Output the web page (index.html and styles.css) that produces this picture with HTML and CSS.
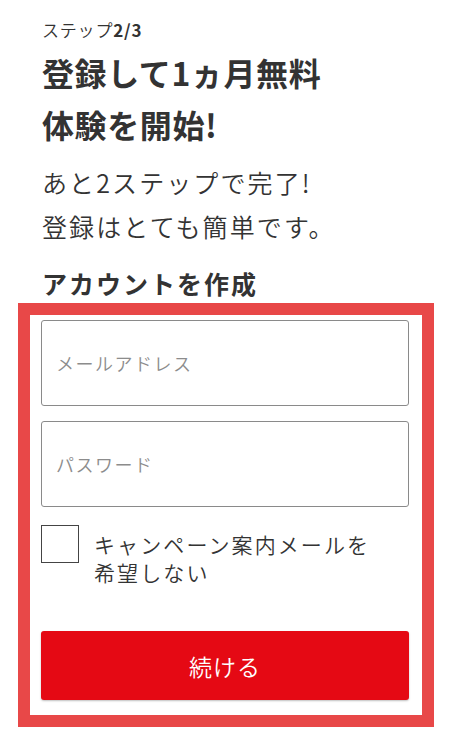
FILE: index.html
```html
<!DOCTYPE html>
<html lang="ja">
<head>
    <meta charset="UTF-8">
    <meta name="viewport" content="width=device-width, initial-scale=1.0">
    <title>登録して1ヵ月無料体験を開始!</title>
    <link rel="stylesheet" href="styles.css">
</head>
<body>

<div class="page">
    <div class="step">ステップ<b>2/3</b></div>
    <h1 class="title">登録して1ヵ月無料<br>体験を開始!</h1>
    <p class="lead">あと2ステップで完了!<br>登録はとても簡単です。</p>
    <h2 class="section">アカウントを作成</h2>

    <div class="highlight">
        <div class="field">
            <input type="email" placeholder="メールアドレス">
        </div>
        <div class="field">
            <input type="password" placeholder="パスワード">
        </div>
        <label class="check">
            <input type="checkbox">
            <span>キャンペーン案内メールを<br>希望しない</span>
        </label>
        <button class="submit">続ける</button>
    </div>
</div>

</body>
</html>
```

FILE: styles.css
```css
body {
    font-family: "Noto Sans CJK JP", "Noto Sans", sans-serif;
    background-color: #fff;
    color: #333;
    margin: 0;
}
.page {
    padding: 20px 0 0 42px;
}
.step {
    font-size: 17px;
    line-height: 20px;
    font-weight: 350;
    letter-spacing: 0.8px;
}
.step b {
    font-weight: bold;
}
.title {
    margin: 6px 0 0;
    font-size: 32px;
    line-height: 52px;
    font-weight: bold;
    letter-spacing: 0.6px;
}
.lead {
    margin: 10px 0 0;
    font-size: 25px;
    line-height: 44px;
    font-weight: 350;
    letter-spacing: 2.1px;
}
.section {
    margin: 20px 0 0;
    font-size: 25px;
    line-height: 30px;
    font-weight: bold;
    letter-spacing: 2px;
}
.highlight {
    margin: 5px 0 0 -24px;
    width: 379px;
    border: 12px solid #e84848;
    padding: 5px 2px 15px 11px;
}
.field {
    margin-bottom: 15px;
}
.field input {
    display: block;
    width: 368px;
    height: 86px;
    box-sizing: border-box;
    border: 1px solid #8a8a8a;
    border-radius: 3px;
    padding: 0 14px;
    font-family: inherit;
    font-size: 18px;
    font-weight: 350;
    color: #333;
    outline: none;
}
.field input::placeholder {
    color: #8c8c8c;
    letter-spacing: 1.5px;
}
.check {
    display: flex;
    align-items: flex-start;
    margin-top: 18px;
}
.check input {
    appearance: none;
    -webkit-appearance: none;
    width: 38px;
    height: 38px;
    margin: 0;
    flex: none;
    box-sizing: border-box;
    border: 1.5px solid #444;
    border-radius: 0;
    background-color: #fff;
}
.check span {
    margin-left: 15px;
    padding-top: 5px;
    font-size: 21px;
    line-height: 28px;
    font-weight: 350;
    letter-spacing: 2.1px;
}
.submit {
    display: block;
    width: 368px;
    height: 69px;
    margin-top: 45px;
    background-color: #e50914;
    border: none;
    border-radius: 3px;
    box-shadow: 0 1px 2px rgba(0,0,0,0.25);
    color: #fff;
    font-family: inherit;
    font-size: 23px;
    font-weight: 350;
    letter-spacing: 1px;
    cursor: pointer;
}
```
